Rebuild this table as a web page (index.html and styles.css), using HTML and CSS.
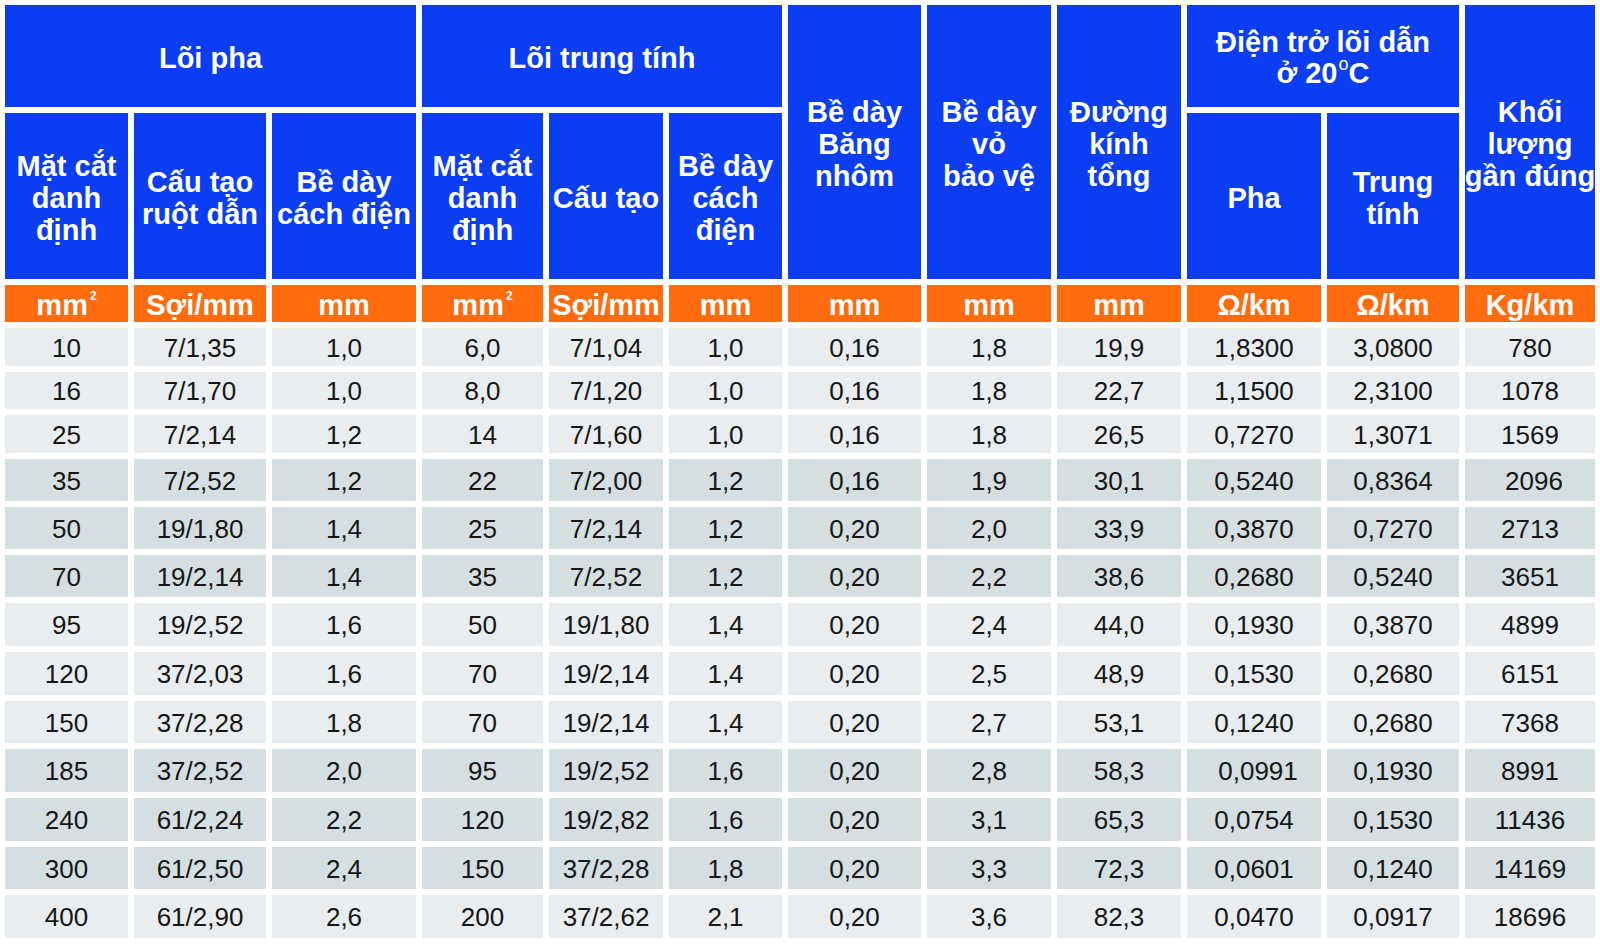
FILE: index.html
```html
<!DOCTYPE html>
<html lang="vi">
<head>
<meta charset="utf-8">
<title>Bảng thông số cáp</title>
<link rel="stylesheet" href="styles.css">
</head>
<body>
<div class="sheet">
  <div class="h h-span3"><span>Lõi pha</span></div>
  <div class="h h-span3"><span>Lõi trung tính</span></div>
  <div class="h h-tall"><span>Bề dày<br>Băng<br>nhôm</span></div>
  <div class="h h-tall"><span>Bề dày<br>vỏ<br>bảo vệ</span></div>
  <div class="h h-tall"><span>Đường<br>kính<br>tổng</span></div>
  <div class="h h-span2"><span>Điện trở lõi dẫn<br>ở 20<sup class="deg">o</sup>C</span></div>
  <div class="h h-tall h-tight"><span>Khối<br>lượng<br>gần đúng</span></div>

  <div class="h"><span>Mặt cắt<br>danh<br>định</span></div>
  <div class="h"><span>Cấu tạo<br>ruột dẫn</span></div>
  <div class="h"><span>Bề dày<br>cách điện</span></div>
  <div class="h"><span>Mặt cắt<br>danh<br>định</span></div>
  <div class="h"><span>Cấu tạo</span></div>
  <div class="h"><span>Bề dày<br>cách<br>điện</span></div>
  <div class="h"><span>Pha</span></div>
  <div class="h"><span>Trung<br>tính</span></div>

  <div class="u"><span>mm<sup class="sq">2</sup></span></div>
  <div class="u"><span>Sợi/mm</span></div>
  <div class="u"><span>mm</span></div>
  <div class="u"><span>mm<sup class="sq">2</sup></span></div>
  <div class="u"><span>Sợi/mm</span></div>
  <div class="u"><span>mm</span></div>
  <div class="u"><span>mm</span></div>
  <div class="u"><span>mm</span></div>
  <div class="u"><span>mm</span></div>
  <div class="u"><span>Ω/km</span></div>
  <div class="u"><span>Ω/km</span></div>
  <div class="u"><span>Kg/km</span></div>

  <div class="d">10</div><div class="d">7/1,35</div><div class="d">1,0</div><div class="d">6,0</div><div class="d">7/1,04</div><div class="d">1,0</div><div class="d">0,16</div><div class="d">1,8</div><div class="d">19,9</div><div class="d">1,8300</div><div class="d">3,0800</div><div class="d">780</div>
  <div class="d">16</div><div class="d">7/1,70</div><div class="d">1,0</div><div class="d">8,0</div><div class="d">7/1,20</div><div class="d">1,0</div><div class="d">0,16</div><div class="d">1,8</div><div class="d">22,7</div><div class="d">1,1500</div><div class="d">2,3100</div><div class="d">1078</div>
  <div class="d">25</div><div class="d">7/2,14</div><div class="d">1,2</div><div class="d">14</div><div class="d">7/1,60</div><div class="d">1,0</div><div class="d">0,16</div><div class="d">1,8</div><div class="d">26,5</div><div class="d">0,7270</div><div class="d">1,3071</div><div class="d">1569</div>
  <div class="d dk">35</div><div class="d dk">7/2,52</div><div class="d dk">1,2</div><div class="d dk">22</div><div class="d dk">7/2,00</div><div class="d dk">1,2</div><div class="d dk">0,16</div><div class="d dk">1,9</div><div class="d dk">30,1</div><div class="d dk">0,5240</div><div class="d dk">0,8364</div><div class="d dk shift">2096</div>
  <div class="d dk">50</div><div class="d dk">19/1,80</div><div class="d dk">1,4</div><div class="d dk">25</div><div class="d dk">7/2,14</div><div class="d dk">1,2</div><div class="d dk">0,20</div><div class="d dk">2,0</div><div class="d dk">33,9</div><div class="d dk">0,3870</div><div class="d dk">0,7270</div><div class="d dk">2713</div>
  <div class="d dk">70</div><div class="d dk">19/2,14</div><div class="d dk">1,4</div><div class="d dk">35</div><div class="d dk">7/2,52</div><div class="d dk">1,2</div><div class="d dk">0,20</div><div class="d dk">2,2</div><div class="d dk">38,6</div><div class="d dk">0,2680</div><div class="d dk">0,5240</div><div class="d dk">3651</div>
  <div class="d">95</div><div class="d">19/2,52</div><div class="d">1,6</div><div class="d">50</div><div class="d">19/1,80</div><div class="d">1,4</div><div class="d">0,20</div><div class="d">2,4</div><div class="d">44,0</div><div class="d">0,1930</div><div class="d">0,3870</div><div class="d">4899</div>
  <div class="d">120</div><div class="d">37/2,03</div><div class="d">1,6</div><div class="d">70</div><div class="d">19/2,14</div><div class="d">1,4</div><div class="d">0,20</div><div class="d">2,5</div><div class="d">48,9</div><div class="d">0,1530</div><div class="d">0,2680</div><div class="d">6151</div>
  <div class="d">150</div><div class="d">37/2,28</div><div class="d">1,8</div><div class="d">70</div><div class="d">19/2,14</div><div class="d">1,4</div><div class="d">0,20</div><div class="d">2,7</div><div class="d">53,1</div><div class="d">0,1240</div><div class="d">0,2680</div><div class="d">7368</div>
  <div class="d dk">185</div><div class="d dk">37/2,52</div><div class="d dk">2,0</div><div class="d dk">95</div><div class="d dk">19/2,52</div><div class="d dk">1,6</div><div class="d dk">0,20</div><div class="d dk">2,8</div><div class="d dk">58,3</div><div class="d dk shift">0,0991</div><div class="d dk">0,1930</div><div class="d dk">8991</div>
  <div class="d dk">240</div><div class="d dk">61/2,24</div><div class="d dk">2,2</div><div class="d dk">120</div><div class="d dk">19/2,82</div><div class="d dk">1,6</div><div class="d dk">0,20</div><div class="d dk">3,1</div><div class="d dk">65,3</div><div class="d dk">0,0754</div><div class="d dk">0,1530</div><div class="d dk">11436</div>
  <div class="d dk">300</div><div class="d dk">61/2,50</div><div class="d dk">2,4</div><div class="d dk">150</div><div class="d dk">37/2,28</div><div class="d dk">1,8</div><div class="d dk">0,20</div><div class="d dk">3,3</div><div class="d dk">72,3</div><div class="d dk">0,0601</div><div class="d dk">0,1240</div><div class="d dk">14169</div>
  <div class="d">400</div><div class="d">61/2,90</div><div class="d">2,6</div><div class="d">200</div><div class="d">37/2,62</div><div class="d">2,1</div><div class="d">0,20</div><div class="d">3,6</div><div class="d">82,3</div><div class="d">0,0470</div><div class="d">0,0917</div><div class="d">18696</div>
</div>
</body>
</html>
```

FILE: styles.css
```css
html, body {
  margin: 0;
  padding: 0;
  background: #ffffff;
}

body {
  width: 1600px;
  height: 944px;
  overflow: hidden;
  font-family: "Liberation Sans", Arial, sans-serif;
}

.sheet {
  display: grid;
  grid-template-columns: 123px 132px 144px 121px 114px 113px 133px 124px 124px 134px 132px 130px;
  grid-template-rows: 102px 166px 37px 38px 37px 38px 42px 42px 42px 43px 43px 42px 43px 43px 42px 43px;
  column-gap: 6px;
  row-gap: 6px;
  padding: 5px 0 0 5px;
}

.h {
  background: #0b3ef2;
  color: #ffffff;
  font-weight: bold;
  font-size: 29px;
  line-height: 32px;
  text-align: center;
  display: flex;
  align-items: center;
  justify-content: center;
  padding-top: 4px;
  box-sizing: border-box;
}

.h-span3 {
  grid-column: span 3;
}

.h-span2 {
  grid-column: span 2;
  line-height: 31px;
}

.h-tall {
  grid-row: span 2;
}

.h-tight {
  white-space: nowrap;
}

.deg {
  font-size: 18px;
  font-weight: normal;
  vertical-align: 0;
  position: relative;
  top: -13px;
  line-height: 0;
  margin-left: 1px;
}

.u {
  background: #ff6b0d;
  color: #ffffff;
  font-weight: bold;
  font-size: 29px;
  display: flex;
  align-items: center;
  justify-content: center;
  padding-top: 3px;
  box-sizing: border-box;
}

.sq {
  font-size: 12px;
  line-height: 0;
  vertical-align: 0;
  position: relative;
  top: -15px;
  margin-left: 2px;
}

.d {
  background: #e9edef;
  color: #161616;
  font-size: 26px;
  display: flex;
  align-items: center;
  justify-content: center;
  padding-top: 2px;
  box-sizing: border-box;
}

.d.dk {
  background: #d5dfe2;
}

.d.shift {
  padding-left: 8px;
}
```
